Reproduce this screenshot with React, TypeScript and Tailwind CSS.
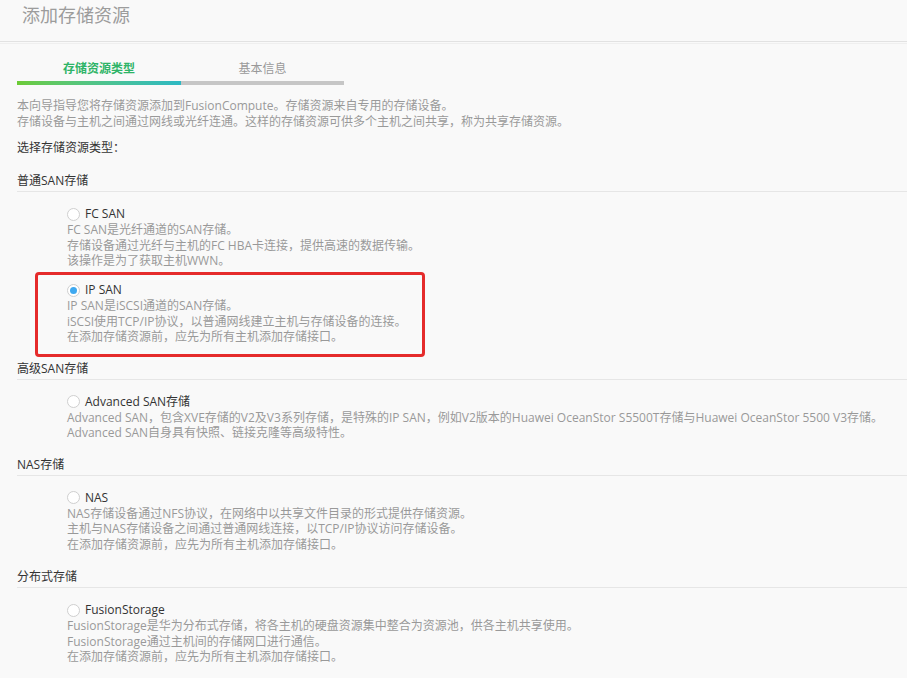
import React from "react";

const font = { fontFamily: '"Open Sans", "Noto Sans CJK SC", sans-serif' };

function Radio({ checked }: { checked?: boolean }) {
  return (
    <span className="inline-flex w-[13px] h-[13px] rounded-full border border-[#cfcfcf] bg-white items-center justify-center mr-[5px] shrink-0">
      {checked ? <span className="w-[7px] h-[7px] rounded-full bg-[#3fa9f0]" /> : null}
    </span>
  );
}

function Item({ label, lines, checked, boxed }: { label: string; lines: string[]; checked?: boolean; boxed?: boolean }) {
  return (
    <div className="relative pl-[50px]">
      {boxed ? (
        <div className="absolute top-[-10px] left-[18px] w-[390px] h-[85px] border-[3px] border-[#e52b2b] rounded-[4px] pointer-events-none" />
      ) : null}
      <div className="flex items-center h-[16px] text-[12px] text-[#333]">
        <Radio checked={checked} />
        <span>{label}</span>
      </div>
      {lines.map((l, i) => (
        <div key={i} className="text-[12px] leading-[15.5px] text-[#999] whitespace-nowrap">
          {l}
        </div>
      ))}
    </div>
  );
}

function Section({ title, children }: { title: string; children: React.ReactNode }) {
  return (
    <div className="mb-[16px]">
      <div className="text-[12px] leading-[16px] text-[#333] pb-[2px] border-b border-[#e6e6e6]">{title}</div>
      <div className="pt-[14px] flex flex-col gap-[13.5px]">{children}</div>
    </div>
  );
}

export default function App() {
  return (
    <div className="w-[907px] h-[678px] bg-[#f9f9f9] overflow-hidden" style={font}>
      <div className="h-[42px] border-b border-[#e2e2e2] pl-[22px] pt-[3px]">
        <div className="text-[18px] leading-[24px] text-[#9c9c9c]">添加存储资源</div>
      </div>
      <div className="h-[1px] mt-[1px] bg-[#efefef]" />
      <div className="pl-[17px]">
        <div className="flex w-[327px] mt-[17px]">
          <div className="w-[164px] flex flex-col">
            <div className="text-center text-[12px] leading-[16px] font-bold text-[#2eb467]">存储资源类型</div>
            <div className="mt-[4px] h-[4px] bg-gradient-to-r from-[#6ccb34] to-[#2db9c4]" />
          </div>
          <div className="w-[163px] flex flex-col">
            <div className="text-center text-[12px] leading-[16px] text-[#999]">基本信息</div>
            <div className="mt-[4px] h-[4px] bg-[#c6c6c6]" />
          </div>
        </div>
        <div className="mt-[13px] text-[12px] leading-[16px] text-[#999]">
          <div>本向导指导您将存储资源添加到FusionCompute。存储资源来自专用的存储设备。</div>
          <div>存储设备与主机之间通过网线或光纤连通。这样的存储资源可供多个主机之间共享，称为共享存储资源。</div>
        </div>
        <div className="mt-[10px] text-[12px] leading-[16px] text-[#333]">选择存储资源类型：</div>
        <div className="mt-[17px]">
          <Section title="普通SAN存储">
            <Item
              label="FC SAN"
              lines={["FC SAN是光纤通道的SAN存储。", "存储设备通过光纤与主机的FC HBA卡连接，提供高速的数据传输。", "该操作是为了获取主机WWN。"]}
            />
            <Item
              label="IP SAN"
              checked
              boxed
              lines={["IP SAN是iSCSI通道的SAN存储。", "iSCSI使用TCP/IP协议，以普通网线建立主机与存储设备的连接。", "在添加存储资源前，应先为所有主机添加存储接口。"]}
            />
          </Section>
          <Section title="高级SAN存储">
            <Item
              label="Advanced SAN存储"
              lines={[
                "Advanced SAN，包含XVE存储的V2及V3系列存储，是特殊的IP SAN，例如V2版本的Huawei OceanStor S5500T存储与Huawei OceanStor 5500 V3存储。",
                "Advanced SAN自身具有快照、链接克隆等高级特性。",
              ]}
            />
          </Section>
          <Section title="NAS存储">
            <Item
              label="NAS"
              lines={["NAS存储设备通过NFS协议，在网络中以共享文件目录的形式提供存储资源。", "主机与NAS存储设备之间通过普通网线连接，以TCP/IP协议访问存储设备。", "在添加存储资源前，应先为所有主机添加存储接口。"]}
            />
          </Section>
          <div className="mt-[17px]" />
          <Section title="分布式存储">
            <Item
              label="FusionStorage"
              lines={["FusionStorage是华为分布式存储，将各主机的硬盘资源集中整合为资源池，供各主机共享使用。", "FusionStorage通过主机间的存储网口进行通信。", "在添加存储资源前，应先为所有主机添加存储接口。"]}
            />
          </Section>
        </div>
      </div>
    </div>
  );
}
